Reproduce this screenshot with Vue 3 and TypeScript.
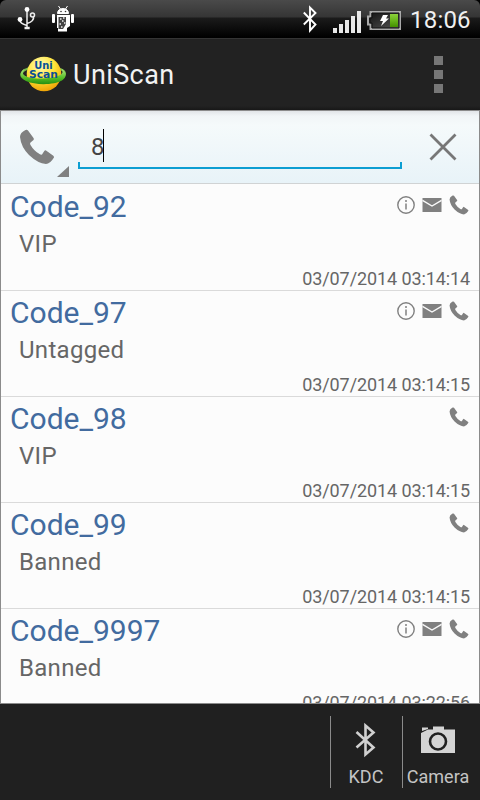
<script setup lang="ts">
interface Entry {
  code: string
  tag: string
  time: string
  full: boolean
}

const entries: Entry[] = [
  { code: 'Code_92', tag: 'VIP', time: '03/07/2014 03:14:14', full: true },
  { code: 'Code_97', tag: 'Untagged', time: '03/07/2014 03:14:15', full: true },
  { code: 'Code_98', tag: 'VIP', time: '03/07/2014 03:14:15', full: false },
  { code: 'Code_99', tag: 'Banned', time: '03/07/2014 03:14:15', full: false },
  { code: 'Code_9997', tag: 'Banned', time: '03/07/2014 03:22:56', full: true },
]
</script>

<template>
  <div class="screen">
    <header class="status">
      <svg class="usb" width="20" height="24" viewBox="0 0 20 24" fill="none" stroke="#eee" stroke-width="1.5">
        <path d="M10 4v17M3 13v1.500q0 3 7 5M16.500 10q1 5.500-6.500 7.500" />
        <circle cx="10" cy="3.500" r="2.400" fill="#fff" stroke="none" />
        <circle cx="3" cy="13.500" r="2.400" fill="#fff" stroke="none" />
        <circle cx="15.500" cy="9" r="2" />
        <path d="M7.500 22h5.200" stroke-width="2.500" />
      </svg>
      <svg class="droid" width="22" height="26" viewBox="0 0 22 26">
        <path d="M5.500 7.500Q5.500 3 11 2.500Q16.500 3 16.500 7.500ZM6.500 0l2 3M15.500 0l-2 3" fill="#fff" stroke="#fff" />
        <path d="M5 9h13v11l-3 2v3.500H6V22H5Z" fill="#fff" />
        <rect x="0" y="8" width="3" height="9" rx="1" fill="#fff" />
        <rect x="19" y="8" width="3" height="9" rx="1" fill="#fff" />
        <circle cx="9" cy="5.500" r=".8" fill="#333" />
        <circle cx="13.500" cy="5.500" r=".8" fill="#333" />
        <path d="M6.500 11h7.500v7l-3 5H6.500Z" fill="#444" />
        <path d="M8 13h1.500M11 12h1.500M10 15h1.500M12 17h1.500M7.500 18h1.500M9 21h1.500" stroke="#eee" stroke-width="1.500" />
      </svg>
      <span class="grow"></span>
      <svg class="bt" width="14" height="28" viewBox="0 0 14 28" fill="none" stroke="#fff" stroke-width="1.900">
        <path d="M.8 7.500L12.500 19.500L7 25.500V2.500L12.500 8L.8 19.500" />
      </svg>
      <svg class="signal" width="29" height="22" viewBox="0 0 29 22" fill="#e8e8e8">
        <path d="M0 17h4v5H0zM6 13h4v9H6zM12 9h4v13h-4zM18 5h4v17h-4zM24 0h4v22h-4z" />
      </svg>
      <svg class="battery" width="34" height="19" viewBox="0 0 34 19">
        <defs>
          <linearGradient id="cell" x1="0" y1="0" x2="0" y2="1">
            <stop offset="0" stop-color="#8bd03b" /><stop offset=".5" stop-color="#68b51b" /><stop offset="1" stop-color="#439000" />
          </linearGradient>
          <linearGradient id="empty" x1="0" y1="0" x2="1" y2="1">
            <stop offset="0" stop-color="#111" /><stop offset="1" stop-color="#555" />
          </linearGradient>
        </defs>
        <path d="M3.500 1H33v17H3.500v-4.500H1v-8h2.500z" fill="url(#empty)" stroke="#aaa" stroke-width="2" />
        <path d="M5 2h27v15H5v-5H3V7h2z" fill="none" stroke="#111" />
        <rect x="23" y="3" width="8" height="13" fill="url(#cell)" />
        <path d="M16 4h5l-2 3.500h3l-8 7.500 2-5h-3z" fill="#fff" />
      </svg>
      <span class="clock">18:06</span>
    </header>

    <div class="actionbar">
      <svg class="logo" width="48" height="36" viewBox="0 0 48 36">
        <defs>
          <radialGradient id="globe" cx=".4" cy=".25" r=".8">
            <stop offset="0" stop-color="#fffbb8" /><stop offset=".5" stop-color="#ffe43a" /><stop offset="1" stop-color="#ee9c00" />
          </radialGradient>
          <linearGradient id="ring" x1="0" y1="0" x2="0" y2="1">
            <stop offset="0" stop-color="#b3e889" /><stop offset=".6" stop-color="#56be26" /><stop offset="1" stop-color="#278e12" />
          </linearGradient>
        </defs>
        <ellipse cx="24.500" cy="17.500" rx="21.500" ry="7" fill="none" stroke="#78bd49" stroke-width="2" />
        <circle cx="25" cy="18" r="17.300" fill="url(#globe)" />
        <path d="M6 12.500C-1 17 0 22 7 25C17 29.500 35 29 43 24.500C49 20.500 47 15 42 12.500C46 17 42 20 32 21.800C20 23.500 3 22 4 17C4 15 5 13.500 6 12.500Z" fill="url(#ring)" />
        <g class="logo-text" text-anchor="middle">
          <text x="24.500" y="13" textLength="18.500" lengthAdjust="spacingAndGlyphs">Uni</text>
          <text x="24.500" y="21.500" textLength="29" lengthAdjust="spacingAndGlyphs">Scan</text>
        </g>
      </svg>
      <h1 class="title">UniScan</h1>
      <span class="overflow"><i></i><i></i><i></i></span>
    </div>

    <main class="content">
      <div class="search">
        <div class="kind">
          <svg width="36" height="36" viewBox="0 0 36 36" fill="#808080">
            <path d="M6.500 1Q1 3.500 1 8Q2 18 10 26Q19 34.500 27 35Q31 35 35 28.500Q35 27 34 26.500L27 21.500Q26 21 25.300 22L23 25.500Q22 26 20.500 25Q15 22 11.500 16Q10.500 14.500 11.500 13.500L14.500 11Q15.300 10 14.500 9L9 1.500Q8 .3 6.500 1Z" />
          </svg>
          <span class="corner"></span>
        </div>
        <div class="field"><span class="query">8</span><span class="caret"></span></div>
        <svg class="clear" width="28" height="28" viewBox="0 0 28 28" stroke="#777" stroke-width="2.800">
          <path d="M1.500 1.500l25 25M26.500 1.500l-25 25" />
        </svg>
      </div>

      <ul class="list">
        <li v-for="entry in entries" :key="entry.code" class="row">
          <div class="head">
            <span class="code">{{ entry.code }}</span>
            <div class="marks">
              <svg v-if="entry.full" width="18" height="18" viewBox="0 0 18 18" fill="none" stroke="#808080">
                <circle cx="9" cy="9" r="8.200" stroke-width="1.400" />
                <path d="M9 7.500v6M9 4v2" stroke-width="1.500" />
              </svg>
              <svg v-if="entry.full" width="20" height="16" viewBox="0 0 20 16">
                <path d="M.5 1h19v14H.5z" fill="#808080" />
                <path d="M.5 3.300L10 9l9.500-5.700" fill="none" stroke="#fafafa" stroke-width="1.400" />
              </svg>
              <svg width="20" height="20" viewBox="0 0 36 36" fill="#808080">
                <path d="M6.500 1Q1 3.500 1 8Q2 18 10 26Q19 34.500 27 35Q31 35 35 28.500Q35 27 34 26.500L27 21.500Q26 21 25.300 22L23 25.500Q22 26 20.500 25Q15 22 11.500 16Q10.500 14.500 11.500 13.500L14.500 11Q15.300 10 14.500 9L9 1.500Q8 .3 6.500 1Z" />
              </svg>
            </div>
          </div>
          <div class="tag">{{ entry.tag }}</div>
          <div class="time">{{ entry.time }}</div>
        </li>
      </ul>
    </main>

    <footer class="bottom">
      <button class="tool">
        <svg width="22" height="36" viewBox="0 0 22 36" fill="none" stroke="#d0d0d0" stroke-width="2.600">
          <path d="M1.500 10L18.500 25.500L10.500 32.500V3.500L18.500 10.500L1.500 25.500" />
        </svg>
        <span>KDC</span>
      </button>
      <button class="tool">
        <svg width="36" height="36" viewBox="0 0 36 36">
          <path d="M1 11L8 7.500H13V4.500H24V7.500H35V31H1ZM2 5.500H8V7L2 9Z" fill="#d4d4d4" />
          <circle cx="18" cy="19.500" r="8" fill="none" stroke="#202020" stroke-width="2.600" />
        </svg>
        <span>Camera</span>
      </button>
    </footer>
  </div>
</template>

<style>
body {
  margin: 0;
  background: #000;
}
</style>

<style scoped>
.screen {
  display: flex;
  flex-direction: column;
  width: 480px;
  height: 800px;
  overflow: hidden;
  font-family: Roboto, "Liberation Sans", sans-serif;
  background: linear-gradient(#000 38px, #202020 38px);
}
svg {
  display: block;
  flex: none;
}
.status {
  display: flex;
  align-items: flex-start;
  box-sizing: border-box;
  height: 38px;
  padding-left: 17px;
  border-radius: 6px 6px 0 0;
  background: linear-gradient(#4a4a4a, #353535 17px, #1b1b1b 18px, #000 37px);
}
.usb { margin-top: 6px; }
.droid { margin: 6px 0 0 15px; }
.grow { flex: 1; }
.bt { margin: 5px 0 0; }
.signal { margin: 11px 0 0 16px; }
.battery { margin: 11px 0 0 5px; }
.clock {
  width: 79px;
  box-sizing: border-box;
  padding-left: 9px;
  color: #f0f0f0;
  font-size: 24px;
  line-height: 40px;
  letter-spacing: .2px;
}
.actionbar {
  display: flex;
  align-items: center;
  box-sizing: border-box;
  height: 72px;
  padding: 0 37px 0 19px;
  border-top: 1px solid #343434;
  background: linear-gradient(#222 67px, #181818 71px);
}
.logo {
  margin-bottom: 1px;
}
.logo-text {
  fill: #095096;
  font: bold 11px "DejaVu Sans", sans-serif;
}
.title {
  flex: 1;
  margin: 0 0 0 6px;
  color: #f2f2f2;
  font-size: 27px;
  font-weight: 400;
  line-height: 72px;
  letter-spacing: .4px;
}
.overflow {
  display: grid;
  gap: 5px;
}
.overflow i {
  width: 9px;
  height: 9px;
  background: #777;
}
.content {
  box-sizing: border-box;
  height: 594px;
  overflow: hidden;
  border: 1px solid #8b8b8b;
  background: #fcfcfc;
}
.search {
  display: flex;
  box-sizing: border-box;
  height: 73px;
  padding-left: 18px;
  border-bottom: 1px solid #d0d3d4;
  background: linear-gradient(#e2e5e8, #f1f5f7 5px, #f5fafb 14px, #e8f3f8);
}
.kind {
  display: flex;
  gap: 2px;
  width: 50px;
  height: 66px;
  padding-top: 18px;
  box-sizing: border-box;
}
.corner {
  align-self: flex-end;
  width: 12px;
  height: 11px;
  background: #808080;
  clip-path: polygon(100% 0, 100% 100%, 0 100%);
}
.field {
  display: flex;
  box-sizing: border-box;
  width: 324px;
  height: 40px;
  margin: 18px 0 0 9px;
  padding-left: 13px;
  background:
    linear-gradient(#0c9ed2, #0c9ed2) bottom / 100% 2px no-repeat,
    linear-gradient(#0c9ed2, #0c9ed2) left bottom / 2px 7px no-repeat,
    linear-gradient(#0c9ed2, #0c9ed2) right bottom / 2px 7px no-repeat;
}
.query {
  width: 12px;
  color: #444;
  font-size: 24px;
  line-height: 36px;
}
.caret {
  width: 1px;
  height: 33px;
  background: #000;
}
.clear {
  margin: 22px 0 0 27px;
}
.list {
  margin: 0;
  padding: 0;
  list-style: none;
}
.row {
  box-sizing: border-box;
  height: 106px;
  padding: 0 9px;
  border-bottom: 1px solid #dadada;
}
.row:first-child {
  height: 107px;
  padding-top: 1px;
}
.head {
  display: flex;
  justify-content: space-between;
  height: 44px;
}
.code {
  color: #426b9f;
  font-size: 30px;
  line-height: 44px;
}
.marks {
  display: flex;
  align-items: center;
  gap: 7px;
  height: 40px;
  padding-right: 1px;
}
.tag {
  padding-left: 9px;
  color: #666;
  font-size: 24px;
  line-height: 30px;
  letter-spacing: .3px;
}
.time {
  color: #666;
  font-size: 18px;
  line-height: 40px;
  letter-spacing: -.1px;
  text-align: right;
}
.bottom {
  display: flex;
  justify-content: flex-end;
  height: 96px;
  padding: 12px 6px 0 0;
  box-sizing: border-box;
  background: #202020;
}
.tool {
  display: flex;
  flex-direction: column;
  align-items: center;
  box-sizing: border-box;
  width: 72px;
  height: 72px;
  padding: 6px 1px 0 0;
  border: 0;
  border-left: 1px solid #8b8b8b;
  background: none;
  color: #c4c4c4;
  font: 18px/38px Roboto, sans-serif;
}
</style>
